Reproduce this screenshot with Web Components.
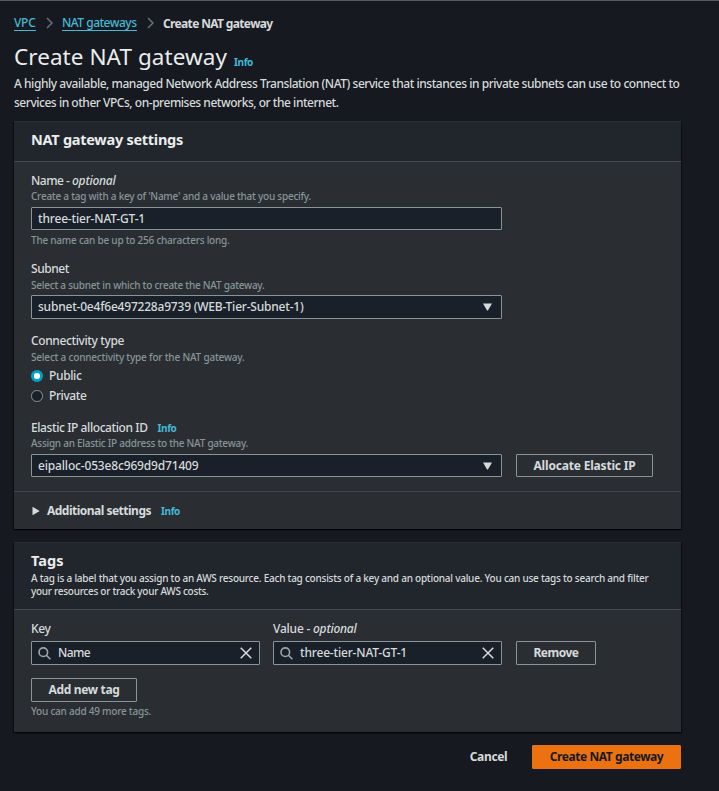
<!DOCTYPE html>
<html lang="en">
<head>
<meta charset="utf-8">
<title>Create NAT gateway</title>
<style>
html{background:#16191f}
body{margin:0;font-family:"Noto Sans","Open Sans",sans-serif;font-size:12px;font-weight:500;color:#d5dbdb}
</style>
</head>
<body>
<nat-page></nat-page>
<script>
const define=(name,html,after)=>{
  const t=document.createElement('template');
  t.innerHTML=html;
  customElements.define(name,class extends HTMLElement{
    constructor(){super();this.attachShadow({mode:'open'}).append(t.content.cloneNode(true));}
    connectedCallback(){if(after)after(this,this.shadowRoot);}
  });
};

// One line of text, tracked so that its advance equals the "w" attribute.
define('fit-text',`<style>:host{display:inline-block;white-space:pre}</style><slot></slot>`,
(el)=>{
  const w=+el.getAttribute('w');
  el.style.letterSpacing='0px';
  const n=el.textContent.length, now=el.getBoundingClientRect().width;
  if(w&&now)el.style.letterSpacing=((w-now)/n)+'px';
});

define('ui-link',`<style>:host{display:block;color:#44b9d6;font-size:12px;line-height:15px;height:15px;border-bottom:1px solid #44b9d6}</style><slot></slot>`);
define('ui-info',`<style>:host{display:block;color:#44b9d6;font-size:10px;font-weight:700;line-height:14px}</style><fit-text w="19">Info</fit-text>`);
define('ui-chevron',`<style>:host{display:block;width:7px;height:12px}svg{display:block}</style><svg width="7" height="12" viewBox="0 0 7 12" fill="none" stroke="#687078" stroke-width="1.5"><path d="M1 1l5 5-5 5"/></svg>`);

define('ui-panel',`<style>
:host{display:block;box-sizing:border-box;width:667px;background:#2a2e33;border-top:1px solid #2a2e33;box-shadow:0 1px 1px #0008,1px 1px 1px #0006,-1px 1px 1px #0006}
header{box-sizing:border-box;background:#21252c;border-bottom:1px solid #414750;padding:7px 17px 0;height:var(--head,40px)}
</style><header><slot name="head"></slot></header><slot></slot>`);

define('ui-label',`<style>:host{display:flex;gap:10px;align-items:center;font-size:12px;line-height:16px;height:16px}::slotted(i){font-style:italic}</style><slot></slot>`);
define('ui-hint',`<style>:host{display:block;font-size:10px;line-height:14px;height:14px;color:#879596}</style><slot></slot>`);

define('ui-input',`<style>
:host{display:flex;align-items:center;box-sizing:border-box;width:471px;height:23px;background:#1a2029;border:1px solid #879596;border-radius:1px;padding:0 9px 0 6px;font-size:12px;line-height:20px}
.v{flex:1}svg{display:none;flex:none}
:host([kind=search]) .s,:host([kind=search]) .x,:host([kind=select]) .a{display:block}
:host([kind=search]){padding:0 7px 0 6px}.s{margin-right:7px}
</style>
<svg class="s" width="13" height="13" viewBox="0 0 13 13" fill="none" stroke="#9ba7a8" stroke-width="1.6"><circle cx="5.3" cy="5.2" r="4.3"/><path d="M8.4 8.3l4 4"/></svg>
<div class="v"><slot></slot></div>
<svg class="x" width="12" height="12" viewBox="0 0 12 12" fill="none" stroke="#d5dbdb" stroke-width="1.5"><path d="M.7.7l10.6 10.6M11.3.7L.7 11.3"/></svg>
<svg class="a" width="9" height="8" viewBox="0 0 9 8"><path d="M0 .5h9L4.9 7.5h-.8z" fill="#d5dbdb"/></svg>`);

define('ui-radio',`<style>
:host{display:flex;align-items:center;height:20px;gap:6.5px;font-size:12px;line-height:20px}
b{box-sizing:border-box;width:11.5px;height:11.5px;border-radius:50%;border:1px solid #879596;background:#1a2029}
:host([checked]) b{border:3.5px solid #00a1c9;background:#fff}
</style><b></b><slot></slot>`);

define('ui-button',`<style>
:host{display:flex;align-items:center;justify-content:center;box-sizing:border-box;height:24px;border:1px solid #879596;border-radius:1px;font-size:12px;font-weight:700;line-height:20px}
:host([kind=primary]){background:#ec7211;border-color:#ec7211;color:#16191f}
:host([kind=plain]){border-color:transparent}
</style><slot></slot>`);

define('nat-page',`<style>
:host{display:block;box-sizing:border-box;width:719px;height:791px;border-top:1px solid #545b64;padding:0 0 0 14px;background:#16191f}
nav{display:flex;align-items:center;padding-top:14px;height:16px}
nav ui-chevron{margin:0 9.5px 0 10px}
h1,h2,p{margin:0;font-weight:400}
.title{display:flex;gap:7px;height:34px;margin-top:9px;align-items:center;color:#eaeded}
.title h1{font-size:22.5px;line-height:34px}
.title ui-info{margin-top:9px}
.desc{font-size:12px;line-height:19px;height:47px}
.desc fit-text{display:block;width:max-content}
h2{font-size:14.5px;line-height:20px;font-weight:700;color:#eaeded}
.body{padding:11px 17px 0}
.row{display:flex}
.exp{display:flex;align-items:center;box-sizing:border-box;height:38px;border-top:1px solid #414750;padding-left:18px;margin-top:14px;font-size:12px;font-weight:700}
.exp svg{margin-right:7px}.exp ui-info{margin-left:10px}
.tagdesc{font-size:10px;line-height:13px;padding-top:2px}
.tagdesc fit-text{display:block;width:max-content}
footer{display:flex;justify-content:flex-end;width:667px;margin-top:13px}
.mt{margin-top:13px}
</style>
<nav><ui-link><fit-text w="21.5">VPC</fit-text></ui-link><ui-chevron></ui-chevron><ui-link><fit-text w="74.5">NAT gateways</fit-text></ui-link><ui-chevron></ui-chevron><b><fit-text w="109.5">Create NAT gateway</fit-text></b></nav>
<div class="title"><h1><fit-text w="213">Create NAT gateway</fit-text></h1><ui-info></ui-info></div>
<div class="desc"><fit-text w="665.5">A highly available, managed Network Address Translation (NAT) service that instances in private subnets can use to connect to</fit-text><fit-text w="324.5">services in other VPCs, on-premises networks, or the internet.</fit-text></div>
<ui-panel>
<h2 slot="head"><fit-text w="152">NAT gateway settings</fit-text></h2>
<div class="body">
<ui-label><span><fit-text w="41">Name - </fit-text><i><fit-text w="43.5">optional</fit-text></i></span></ui-label>
<ui-hint><fit-text w="280">Create a tag with a key of 'Name' and a value that you specify.</fit-text></ui-hint>
<ui-input style="margin-top:4px"><fit-text w="107">three-tier-NAT-GT-1</fit-text></ui-input>
<ui-hint style="margin-top:3px"><fit-text w="198.5">The name can be up to 256 characters long.</fit-text></ui-hint>
<ui-label style="margin-top:14px"><fit-text w="38">Subnet</fit-text></ui-label>
<ui-hint style="margin-top:1px"><fit-text w="233.5">Select a subnet in which to create the NAT gateway.</fit-text></ui-hint>
<ui-input kind="select" style="margin-top:3px;height:24px"><fit-text w="265.5">subnet-0e4f6e497228a9739 (WEB-Tier-Subnet-1)</fit-text></ui-input>
<ui-label style="margin-top:14px"><fit-text w="93">Connectivity type</fit-text></ui-label>
<ui-hint style="margin-top:1px"><fit-text w="213.5">Select a connectivity type for the NAT gateway.</fit-text></ui-hint>
<ui-radio checked style="margin-top:2px"><fit-text w="32.5">Public</fit-text></ui-radio>
<ui-radio><fit-text w="37.5">Private</fit-text></ui-radio>
<ui-label style="margin-top:14px"><fit-text w="116.5">Elastic IP allocation ID</fit-text><ui-info></ui-info></ui-label>
<ui-hint><fit-text w="217">Assign an Elastic IP address to the NAT gateway.</fit-text></ui-hint>
<div class="row" style="gap:14px;margin-top:4px"><ui-input kind="select"><fit-text w="160.5">eipalloc-053e8c969d9d71409</fit-text></ui-input><ui-button style="width:137px;height:23px"><fit-text w="102">Allocate Elastic IP</fit-text></ui-button></div>
</div>
<div class="exp"><svg width="8" height="10" viewBox="0 0 8 10"><path d="M.5.7v8.6L7.7 5z" fill="#d5dbdb"/></svg><fit-text w="104">Additional settings</fit-text><ui-info></ui-info></div>
</ui-panel>
<ui-panel class="mt" style="--head:67px">
<div slot="head"><h2><fit-text w="32.5">Tags</fit-text></h2><div class="tagdesc"><fit-text w="617.5">A tag is a label that you assign to an AWS resource. Each tag consists of a key and an optional value. You can use tags to search and filter</fit-text><fit-text w="177.5">your resources or track your AWS costs.</fit-text></div></div>
<div class="body" style="height:111px">
<div class="row"><ui-label style="width:242px"><fit-text w="19.5">Key</fit-text></ui-label><ui-label><span><fit-text w="40">Value - </fit-text><i><fit-text w="43.5">optional</fit-text></i></span></ui-label></div>
<div class="row" style="margin-top:4px"><ui-input kind="search" style="width:229px;height:24px"><fit-text w="32">Name</fit-text></ui-input><ui-input kind="search" style="width:229px;height:24px;margin:0 14px 0 13px"><fit-text w="107">three-tier-NAT-GT-1</fit-text></ui-input><ui-button style="width:80px"><fit-text w="45">Remove</fit-text></ui-button></div>
<ui-button style="width:106px;margin-top:13px"><fit-text w="71">Add new tag</fit-text></ui-button>
<ui-hint style="margin-top:2px"><fit-text w="120">You can add 49 more tags.</fit-text></ui-hint>
</div>
</ui-panel>
<footer><ui-button kind="plain" style="width:87px"><fit-text w="37.5">Cancel</fit-text></ui-button><ui-button kind="primary" style="width:149px"><fit-text w="113.5">Create NAT gateway</fit-text></ui-button></footer>`);
</script>
</body>
</html>
